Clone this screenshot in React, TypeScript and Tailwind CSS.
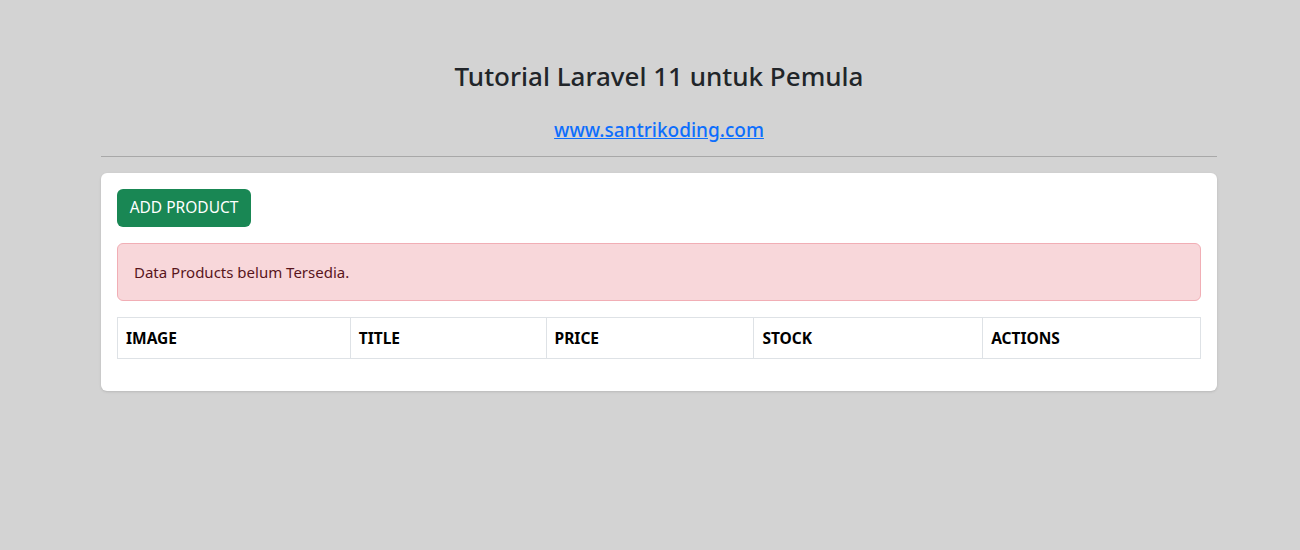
const columns = [
  { label: "IMAGE", width: "w-[233px]" },
  { label: "TITLE", width: "w-[196px]" },
  { label: "PRICE", width: "w-[208px]" },
  { label: "STOCK", width: "w-[229px]" },
  { label: "ACTIONS", width: "w-[218px]" },
];

export default function App() {
  return (
    <div className="min-h-[550px] bg-[#d3d3d3] font-['Noto_Sans',sans-serif] text-[#212529]">
      <div className="ml-[101px] w-[1116px] pt-[59px]">
        <h3 className="text-center text-[26px] leading-[34px] font-medium">
          Tutorial Laravel 11 untuk Pemula
        </h3>
        <h5 className="mt-[25px] text-center text-[19px] leading-[24px] font-medium">
          <a href="#" className="text-[#0d6efd] underline">
            www.santrikoding.com
          </a>
        </h5>
        <hr className="mt-[14px] border-t border-[#a8a8a8]" />
        <div className="mt-[16px] rounded-md bg-white p-4 shadow-sm">
          <button className="h-[38px] w-[134px] rounded-md bg-[#198754] text-[15.5px] text-white">
            ADD PRODUCT
          </button>
          <div className="mt-4 rounded-md border border-[#f1aeb5] bg-[#f8d7da] px-4 py-4 text-[15px] leading-6 text-[#58151c]">
            Data Products belum Tersedia.
          </div>
          <table className="mt-4 mb-4 w-full border-collapse">
            <thead>
              <tr>
                {columns.map((col) => (
                  <th
                    key={col.label}
                    className={`${col.width} border border-[#dee2e6] px-2 py-2 text-left text-[15.5px] leading-6 font-bold text-black`}
                  >
                    {col.label}
                  </th>
                ))}
              </tr>
            </thead>
          </table>
        </div>
      </div>
    </div>
  );
}
